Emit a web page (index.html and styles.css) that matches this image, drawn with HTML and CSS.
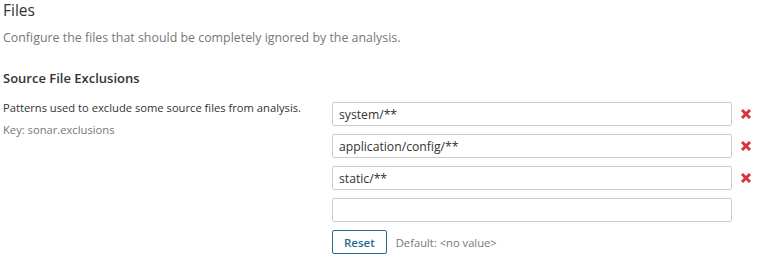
FILE: index.html
```html
<!DOCTYPE html>
<html lang="en">
<head>
    <meta charset="UTF-8">
    <title>Files - Settings</title>
    <link rel="stylesheet" href="styles.css">
</head>
<body>
    <div class="page">
        <h2 class="category-title">Files</h2>
        <p class="category-description">Configure the files that should be completely ignored by the analysis.</p>

        <div class="sub-category">
            <h3 class="sub-title">Source File Exclusions</h3>

            <div class="definition">
                <div class="definition-info">
                    <div class="definition-text">Patterns used to exclude some source files from analysis.</div>
                    <div class="definition-key">Key: sonar.exclusions</div>
                </div>

                <div class="definition-value">
                    <ul class="values">
                        <li class="value-row">
                            <input class="text-input" type="text" value="system/**">
                            <button class="remove-button" title="Remove value">
                                <svg width="12" height="12" viewBox="0 0 12 12"><path d="M2 2 L10 10 M10 2 L2 10" stroke="#d4333f" stroke-width="3"/></svg>
                            </button>
                        </li>
                        <li class="value-row">
                            <input class="text-input" type="text" value="application/config/**">
                            <button class="remove-button" title="Remove value">
                                <svg width="12" height="12" viewBox="0 0 12 12"><path d="M2 2 L10 10 M10 2 L2 10" stroke="#d4333f" stroke-width="3"/></svg>
                            </button>
                        </li>
                        <li class="value-row">
                            <input class="text-input" type="text" value="static/**">
                            <button class="remove-button" title="Remove value">
                                <svg width="12" height="12" viewBox="0 0 12 12"><path d="M2 2 L10 10 M10 2 L2 10" stroke="#d4333f" stroke-width="3"/></svg>
                            </button>
                        </li>
                        <li class="value-row">
                            <input class="text-input" type="text" value="">
                        </li>
                    </ul>

                    <div class="actions">
                        <button class="reset-button">Reset</button>
                        <span class="default-value">Default: &lt;no value&gt;</span>
                    </div>
                </div>
            </div>
        </div>
    </div>
</body>
</html>
```

FILE: styles.css
```css
* {
    margin: 0;
    padding: 0;
    box-sizing: border-box;
}

body {
    font-family: "Open Sans", "Noto Sans", sans-serif;
    font-size: 12.4px;
    color: #333;
    background: #fff;
}

.page {
    padding: 0 3px;
}

.category-title {
    font-size: 15.5px;
    font-weight: 400;
    line-height: 20px;
    color: #333;
}

.category-description {
    margin-top: 8px;
    line-height: 20px;
    color: #777;
}

.sub-category {
    margin-top: 20px;
}

.sub-title {
    font-size: 13px;
    font-weight: 600;
    line-height: 20px;
    color: #333;
}

.definition {
    display: flex;
    margin-top: 14px;
}

.definition-info {
    width: 329px;
    margin-top: -2px;
    font-size: 11.2px;
    line-height: 15px;
}

.definition-key {
    margin-top: 7px;
    color: #777;
}

.values {
    list-style: none;
}

.value-row {
    display: flex;
    align-items: center;
    margin-bottom: 8px;
}

.text-input {
    width: 400px;
    height: 24px;
    padding: 0 6px;
    border: 1px solid #ccc;
    border-radius: 2px;
    font-family: inherit;
    font-size: 12.2px;
    color: #333;
}

.remove-button {
    display: flex;
    margin-left: 8px;
    padding: 0;
    border: 0;
    background: none;
}

.actions {
    display: flex;
    align-items: center;
}

.reset-button {
    height: 24px;
    padding: 0 11px;
    border: 1px solid #236a97;
    border-radius: 2px;
    background: #fff;
    color: #236a97;
    font-family: inherit;
    font-size: 11.5px;
    font-weight: 600;
}

.default-value {
    margin-left: 9px;
    font-size: 11.2px;
    color: #777;
}
```
